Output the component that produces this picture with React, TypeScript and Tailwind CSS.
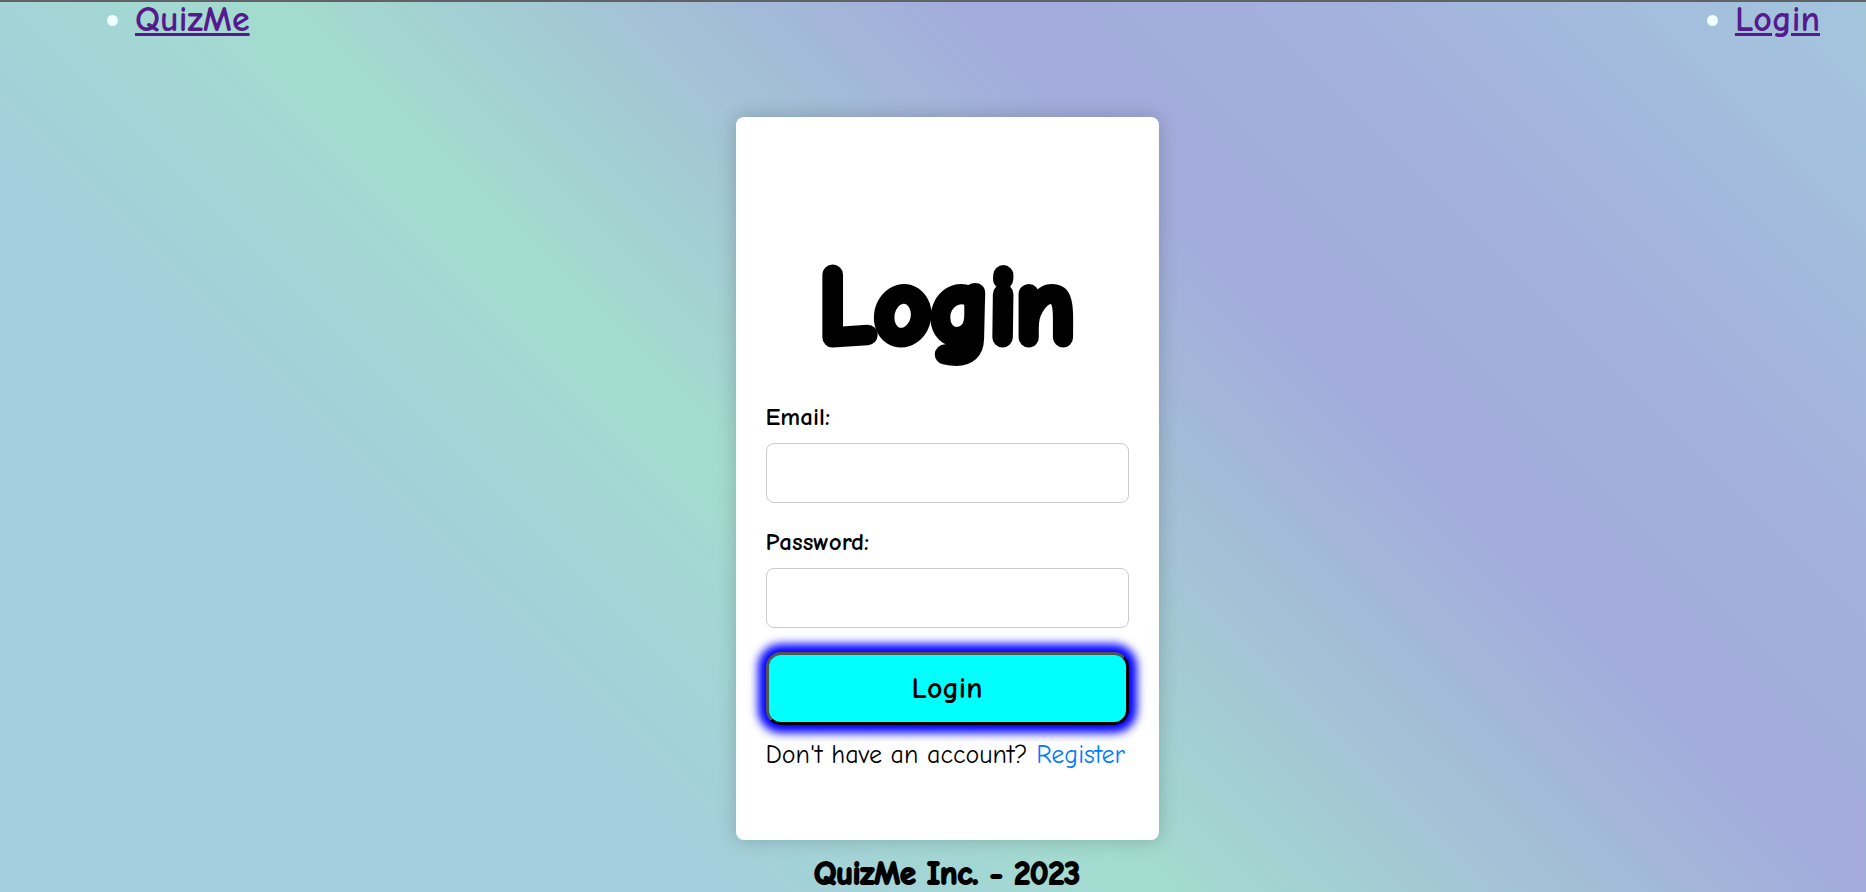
import React from "react";

function Field({ id, label, type }: { id: string; label: string; type: string }) {
  return (
    <div className="mb-6 flex flex-col">
      <label htmlFor={id} className="mb-[11px] text-[25px] leading-[30px] font-bold">{label}</label>
      <input id={id} type={type} className="h-[60px] w-full rounded-lg border border-[#ccc] bg-white px-3 text-2xl" />
    </div>
  );
}

export default function App() {
  return (
    <div className="flex min-h-screen flex-col border-t-2 border-[#5f6368] bg-[linear-gradient(45deg,#a4cedc_0%,#a4cedc_26%,#a3dccf_42%,#a3acdc_67%,#a3aedc_77%,#a4cedc_108%)] font-['Comic_Neue','Open_Sans',sans-serif] text-black">
      <nav className="pr-[46px] pl-[135px]">
        <ul className="flex list-disc justify-between text-4xl leading-9 font-bold marker:text-[#f0ffff]">
          <li><a href="#home" className="text-[#551a8b] underline decoration-3">QuizMe</a></li>
          <li><a href="#login" className="text-[#551a8b] underline decoration-3">Login</a></li>
        </ul>
      </nav>
      <main className="ml-7 mt-[79px] flex w-[423px] flex-col self-center rounded-lg bg-white px-[30px] pt-[112px] pb-[67px] shadow-[0_0_20px_rgba(0,0,0,0.2)]">
        <h1 className="mb-4 text-center text-[108px] leading-[157px] font-bold [-webkit-text-stroke:10px_black]">Login</h1>
        <form>
          <Field id="email" label="Email:" type="email" />
          <Field id="password" label="Password:" type="password" />
          <button type="submit" className="h-[73px] w-full rounded-[15px] border-3 border-black bg-[#0ff] text-3xl font-bold shadow-[0_0_10px_8px_blue] [border-style:outset]">Login</button>
        </form>
        <p className="mt-3 text-[26px] leading-9 whitespace-nowrap">Don't have an account? <a href="#register" className="text-[#007bff]">Register</a></p>
      </main>
      <footer className="ml-7 mt-4 self-center text-[32px] leading-9 font-bold [-webkit-text-stroke:2px_black]">QuizMe Inc. - 2023</footer>
    </div>
  );
}
